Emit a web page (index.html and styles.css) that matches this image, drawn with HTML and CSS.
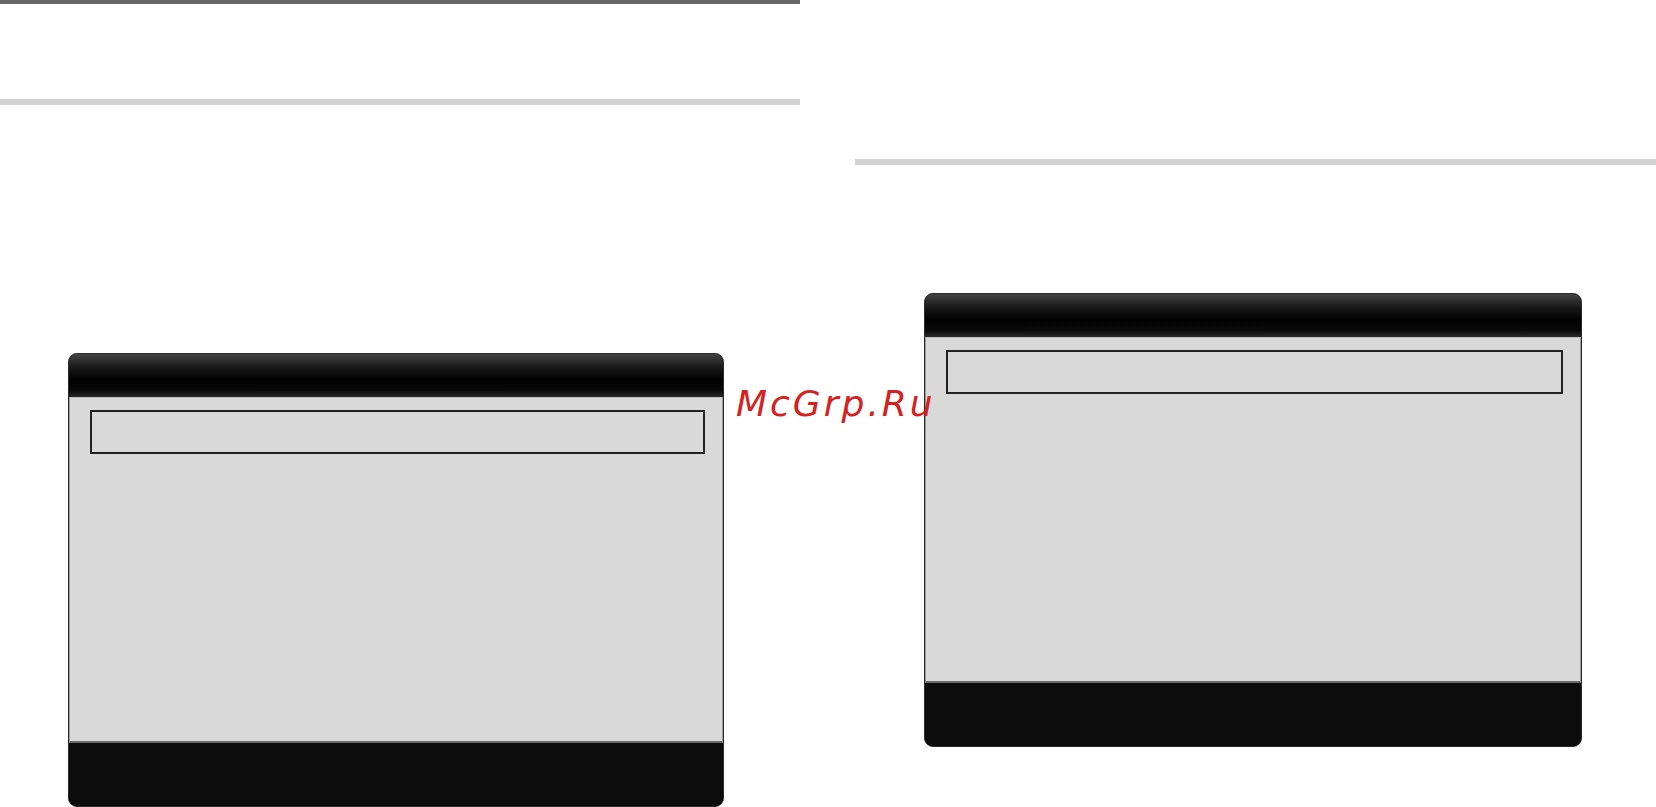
FILE: index.html
```html
<!DOCTYPE html>
<html lang="ru">
<head>
<meta charset="utf-8">
<title>McGrp.Ru</title>
<link rel="stylesheet" href="styles.css">
</head>
<body>
<div class="page">
  <section class="column column-left">
    <div class="rule-top"></div>
    <div class="rule rule-left"></div>
    <div class="screen screen-left">
      <div class="screen-head"></div>
      <div class="screen-body">
        <div class="field"></div>
      </div>
      <div class="screen-foot"></div>
    </div>
  </section>
  <section class="column column-right">
    <div class="rule rule-right"></div>
    <div class="screen screen-right">
      <div class="screen-head"></div>
      <div class="screen-body">
        <div class="field"></div>
      </div>
      <div class="screen-foot"></div>
    </div>
  </section>
  <div class="watermark">McGrp.Ru</div>
</div>
</body>
</html>
```
FILE: styles.css
```css
html, body {
  margin: 0;
  padding: 0;
  background: #ffffff;
}

.page {
  position: relative;
  display: flex;
  width: 1656px;
  height: 807px;
  overflow: hidden;
  font-family: "DejaVu Sans", Verdana, sans-serif;
}

.column {
  display: flex;
  flex-direction: column;
}

.column-left {
  width: 800px;
}

.column-right {
  width: 801px;
  margin-left: 55px;
}

.rule-top {
  height: 4px;
  background: #666666;
}

.rule {
  height: 6px;
  background: #d3d3d3;
}

.rule-left {
  margin-top: 95px;
}

.rule-right {
  margin-top: 159px;
}

/* TV-style menu screen */
.screen {
  display: flex;
  flex-direction: column;
  border: 1px solid #2a2a2a;
  border-radius: 9px;
  overflow: hidden;
  background: #0c0c0c;
  box-sizing: border-box;
}

.screen-left {
  width: 656px;
  height: 454px;
  margin-left: 68px;
  margin-top: 248px;
}

.screen-right {
  width: 658px;
  height: 454px;
  margin-left: 69px;
  margin-top: 128px;
}

.screen-head {
  height: 43px;
  background: linear-gradient(#444444 0%, #1a1a1a 30%, #000000 60%, #0a0a0a 85%, #2a2a2a 100%);
}

.screen-body {
  height: 346px;
  background: #d9d9d9;
  box-sizing: border-box;
  padding: 12px 17px 0 20px;
  border-left: 1px solid #9a9a9a;
  border-right: 1px solid #9a9a9a;
  border-top: 1px solid #bdbdbd;
  border-bottom: 2px solid #6a6a6a;
}

.field {
  height: 44px;
  border: 2px solid #222222;
  box-sizing: border-box;
}

.screen-foot {
  flex: 1;
  background: #0c0c0c;
}

.watermark {
  position: absolute;
  left: 736px;
  top: 383px;
  font-size: 36px;
  font-style: italic;
  letter-spacing: 3px;
  line-height: 42px;
  color: #d42222;
}
```
